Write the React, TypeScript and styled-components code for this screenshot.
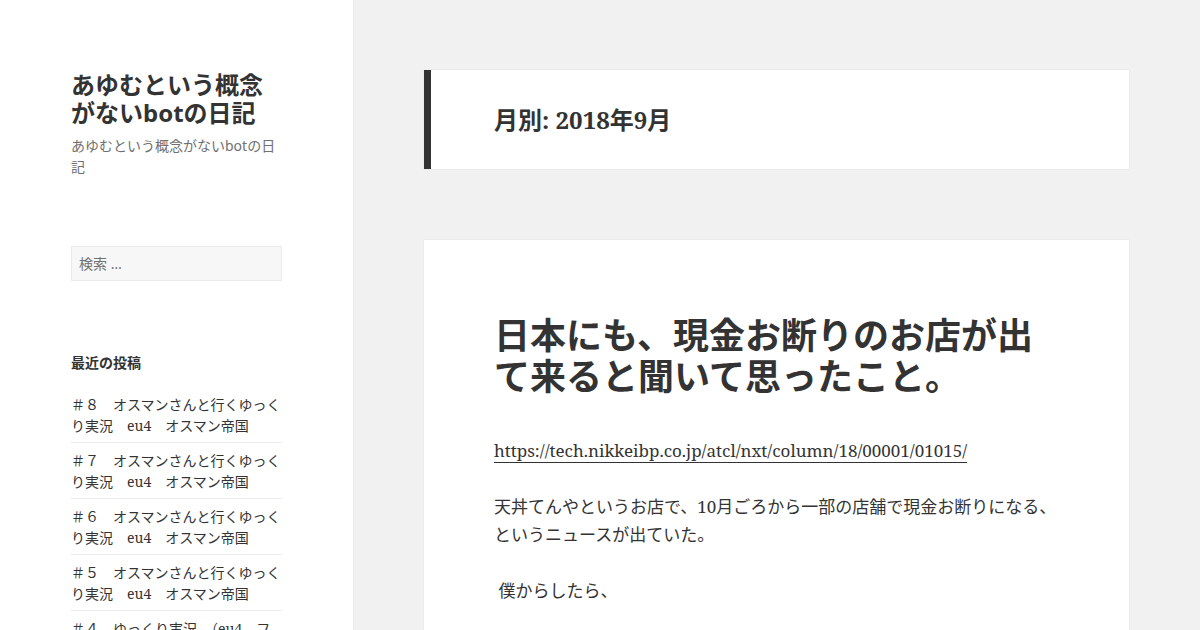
import styled, { createGlobalStyle } from "styled-components";

const GlobalStyle = createGlobalStyle`
  html, body {
    margin: 0;
    padding: 0;
    background: #f1f1f1;
    color: #333;
    font-family: "Noto Serif", "Liberation Serif", "Noto Sans CJK JP", serif;
  }
  * {
    box-sizing: border-box;
  }
`;

const Page = styled.div`
  display: flex;
  align-items: flex-start;
  height: 630px;
  overflow: hidden;
`;

const Sidebar = styled.aside`
  width: 353px;
  flex: none;
  align-self: stretch;
  background: #fff;
  box-shadow: 0 0 1px rgba(0, 0, 0, 0.15);
  padding: 71px 71px 0;
`;

const SiteTitle = styled.h1`
  margin: 0;
  font-family: "Noto Sans", "Noto Sans CJK JP", sans-serif;
  font-size: 24px;
  font-weight: 700;
  line-height: 28px;
  color: #333;
`;

const SiteDescription = styled.p`
  margin: 8px 0 0;
  font-family: "Noto Sans", "Noto Sans CJK JP", sans-serif;
  font-size: 14px;
  line-height: 21px;
  color: #707070;
`;

const SearchField = styled.input`
  display: block;
  margin-top: 69px;
  width: 211px;
  height: 35px;
  padding: 0 7px;
  border: 1px solid #eaeaea;
  border-radius: 0;
  background: #f7f7f7;
  font-family: "Noto Sans", "Noto Sans CJK JP", sans-serif;
  font-size: 14px;
  color: #333;
  outline: none;

  &::placeholder {
    color: #707070;
  }
`;

const Widget = styled.section`
  margin-top: 71px;
`;

const WidgetTitle = styled.h2`
  margin: 0 0 14px;
  font-family: "Noto Sans", "Noto Sans CJK JP", sans-serif;
  font-size: 14px;
  font-weight: 700;
  line-height: 21px;
  color: #333;
`;

const PostList = styled.ul`
  list-style: none;
  margin: 0;
  padding: 0;
`;

const PostItem = styled.li`
  padding: 7px 0 6px;
  border-top: 1px solid #eaeaea;
  font-size: 14px;
  line-height: 21px;
  font-family: "Noto Serif", "Liberation Serif", "Noto Sans CJK JP", serif;

  &:first-child {
    border-top: none;
  }

  a {
    color: #333;
    text-decoration: none;
  }
`;

const Main = styled.main`
  flex: 1;
  padding: 70px 71px 0;
  display: flex;
  flex-direction: column;
  gap: 71px;
`;

const PageHeader = styled.header`
  flex: none;
  background: #fff;
  box-shadow: 0 0 1px rgba(0, 0, 0, 0.15);
  border-left: 7px solid #333;
  height: 99px;
  padding: 0 63px;
  display: flex;
  align-items: center;
`;

const PageTitle = styled.h1`
  margin: 0;
  font-size: 24px;
  font-weight: 700;
  line-height: 30px;
  color: #333;
`;

const Article = styled.article`
  flex: none;
  background: #fff;
  box-shadow: 0 0 1px rgba(0, 0, 0, 0.15);
  padding: 73px 70px 60px;
  min-height: 500px;
`;

const EntryTitle = styled.h2`
  margin: 0 0 42px;
  font-family: "Noto Sans CJK JP", "Noto Sans", sans-serif;
  font-size: 36px;
  font-weight: 700;
  line-height: 41px;
  color: #333;
`;

const Paragraph = styled.p`
  margin: 0 0 28px;
  font-size: 17px;
  line-height: 28px;
  color: #333;

  a {
    color: #333;
    text-decoration: none;
    border-bottom: 1px solid #333;
  }
`;

const posts = [
  "＃８　オスマンさんと行くゆっくり実況　eu4　オスマン帝国",
  "＃７　オスマンさんと行くゆっくり実況　eu4　オスマン帝国",
  "＃６　オスマンさんと行くゆっくり実況　eu4　オスマン帝国",
  "＃５　オスマンさんと行くゆっくり実況　eu4　オスマン帝国",
  "＃４　ゆっくり実況　（eu4　フランス）",
];

export default function App() {
  return (
    <>
      <GlobalStyle />
      <Page>
        <Sidebar>
          <SiteTitle>あゆむという概念がないbotの日記</SiteTitle>
          <SiteDescription>あゆむという概念がないbotの日記</SiteDescription>
          <SearchField placeholder="検索 …" />
          <Widget>
            <WidgetTitle>最近の投稿</WidgetTitle>
            <PostList>
              {posts.map((p) => (
                <PostItem key={p}>
                  <a href="#">{p}</a>
                </PostItem>
              ))}
            </PostList>
          </Widget>
        </Sidebar>
        <Main>
          <PageHeader>
            <PageTitle>月別: 2018年9月</PageTitle>
          </PageHeader>
          <Article>
            <EntryTitle>日本にも、現金お断りのお店が出て来ると聞いて思ったこと。</EntryTitle>
            <Paragraph>
              <a href="#">https://tech.nikkeibp.co.jp/atcl/nxt/column/18/00001/01015/</a>
            </Paragraph>
            <Paragraph>
              天丼てんやというお店で、10月ごろから一部の店舗で現金お断りになる、というニュースが出ていた。
            </Paragraph>
            <Paragraph>{"\u00a0"}僕からしたら、</Paragraph>
          </Article>
        </Main>
      </Page>
    </>
  );
}
